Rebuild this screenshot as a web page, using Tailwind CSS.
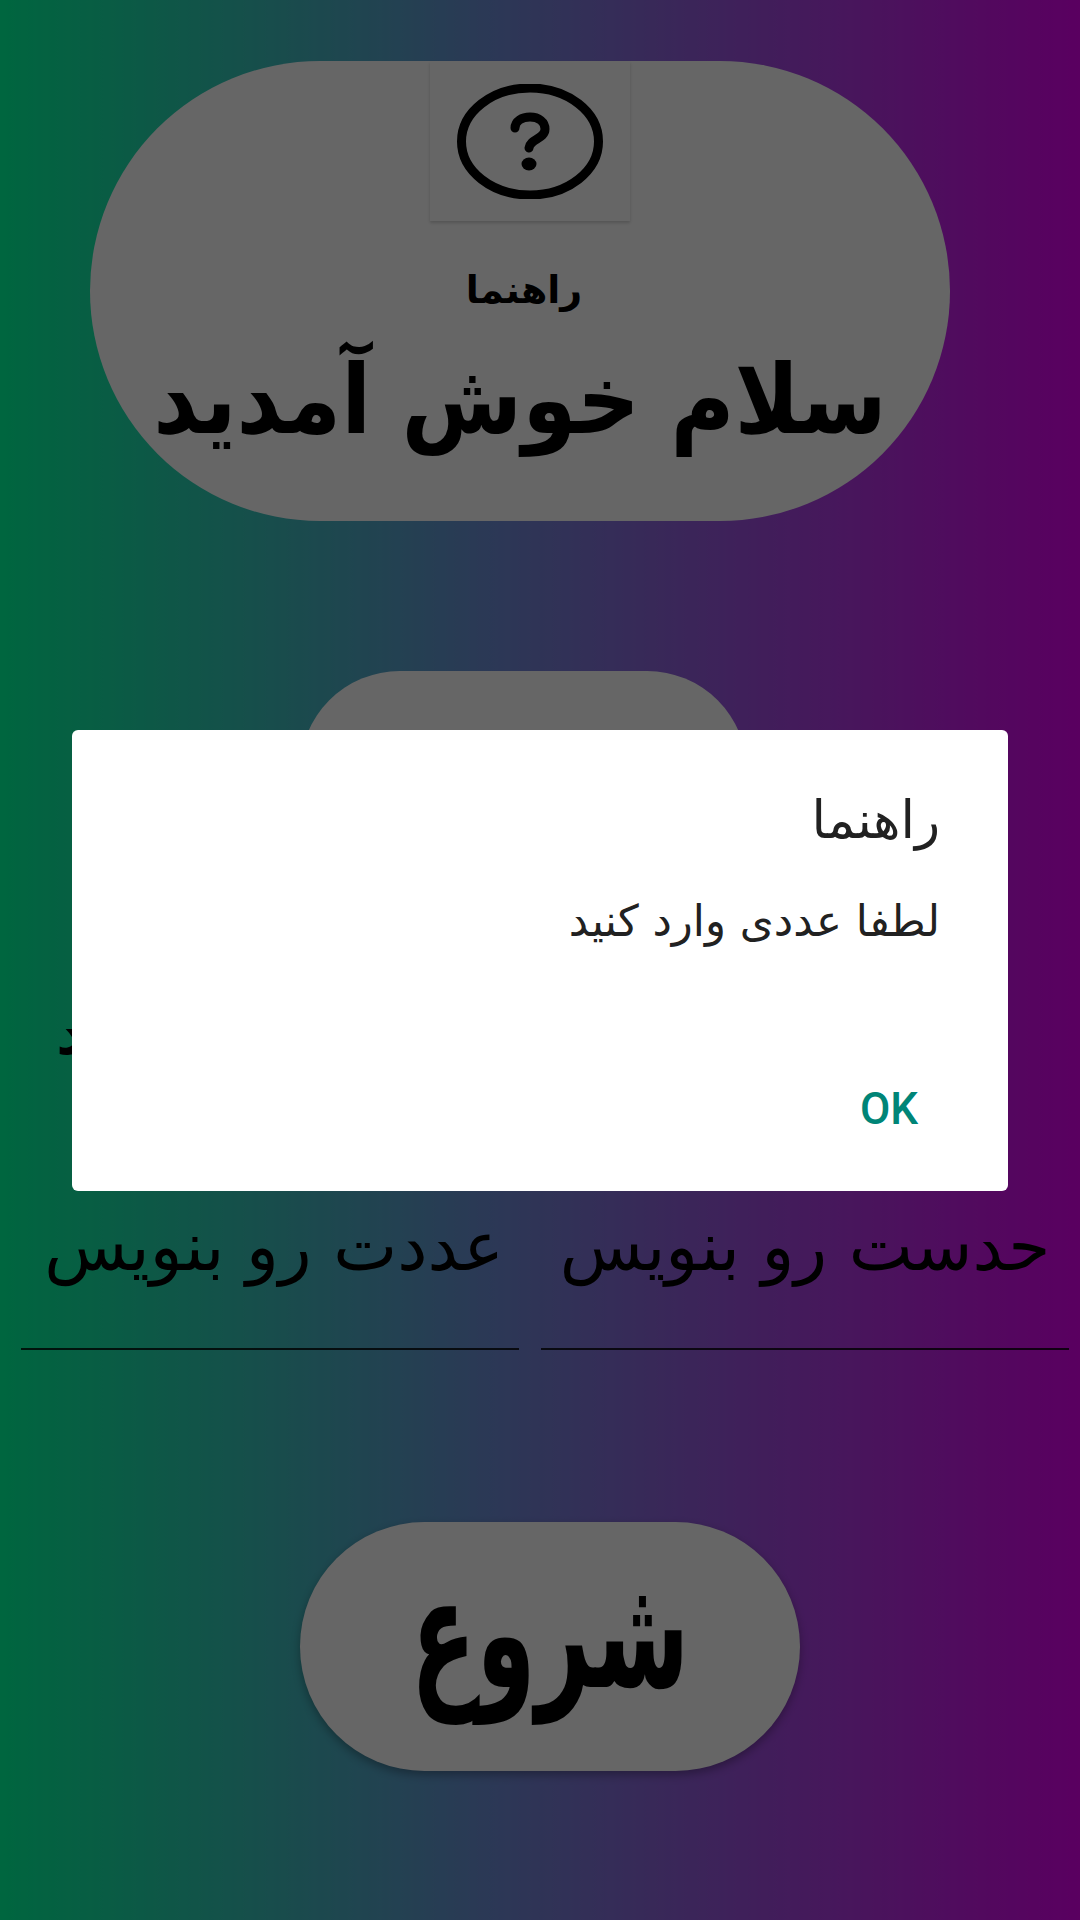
<!DOCTYPE html>
<html lang="fa">
<head>
    <meta charset="UTF-8">
    <meta name="viewport" content="width=device-width, initial-scale=1.0">
    <title>Guess</title>
    <script src="https://cdn.jsdelivr.net/npm/@tailwindcss/browser@4"></script>
</head>

<body class="relative w-[1080px] h-[1920px] overflow-hidden bg-linear-to-r/srgb from-[#00ff9e] via-[#6a91d5] via-44% to-[#e000f0] font-['DejaVu_Sans',sans-serif]">
    <main class="flex flex-col items-start pt-[61px] h-full">
        <section class="ml-[90px] w-[860px] h-[460px] rounded-[230px] bg-white flex flex-col items-center">
            <button class="ml-[20px] w-[200px] h-[160px] bg-white shadow-[0_2px_3px_rgba(0,0,0,0.18)] flex items-center justify-center">
                <svg class="w-[146px] h-[115px]" viewBox="0 0 146 115" fill="none" stroke="#000" stroke-width="9" stroke-linecap="round">
                    <ellipse cx="73" cy="57.5" rx="68.5" ry="53.5"/>
                    <path d="M58 44C58 37 65 33 73 33C82 33 88 38 88 45C88 55 73 55 72 64"/>
                    <ellipse cx="72" cy="80" rx="7.5" ry="6.5" fill="#000" stroke="none"/>
                </svg>
            </button>
            <p dir="rtl" class="ml-[8px] mt-[42px] text-[38px] leading-[54px] font-bold text-black">راهنما</p>
            <h1 dir="rtl" class="mt-[23px] text-[92px] leading-[120px] font-bold text-black whitespace-nowrap scale-x-[0.95] scale-y-[1.05]">سلام خوش آمدید</h1>
        </section>

        <div class="ml-[300px] mt-[150px] w-[447px] h-[200px] rounded-[100px] bg-white"></div>

        <p dir="rtl" class="ml-[56px] mt-[122px] text-[60px] leading-[80px] font-bold text-black whitespace-nowrap">برای بازی حدس عدد</p>

        <div dir="rtl" class="mt-[135px] w-full flex gap-[22px] pl-[21px] pr-[11px]">
            <div class="flex-1 h-[142px] border-b-2 border-black/80 text-center text-[68px] leading-[78px] text-black whitespace-nowrap">حدست رو بنویس</div>
            <div class="w-[498px] h-[142px] pl-[8px] border-b-2 border-black/80 text-center text-[68px] leading-[78px] text-black whitespace-nowrap">عددت رو بنویس</div>
        </div>

        <button class="ml-[300px] mt-[172px] w-[500px] h-[249px] pb-[28px] rounded-[125px] bg-white shadow-[0_4px_10px_rgba(0,0,0,0.3)] flex items-center justify-center">
            <span dir="rtl" class="inline-block text-[110px] leading-[120px] font-bold text-black scale-x-[0.87] scale-y-[1.41]">شروع</span>
        </button>
    </main>

    <!-- dialog -->
    <div class="absolute inset-0 bg-black/60"></div>
    <div dir="rtl" class="absolute left-[72px] top-[730px] w-[936px] h-[461px] bg-white rounded-[6px] flex flex-col">
        <h2 class="pt-[50px] px-[68px] text-[52px] leading-[80px] text-[#212121]">راهنما</h2>
        <p class="mt-[31px] px-[68px] text-[43.5px] leading-[60px] text-[#212121]">لطفا عددی وارد کنید</p>
        <div class="mt-auto pb-[57px] pr-[90px] flex justify-start">
            <button class="font-['Roboto',sans-serif] font-medium text-[44px] leading-[50px] text-[#008577]">OK</button>
        </div>
    </div>
</body>

</html>
